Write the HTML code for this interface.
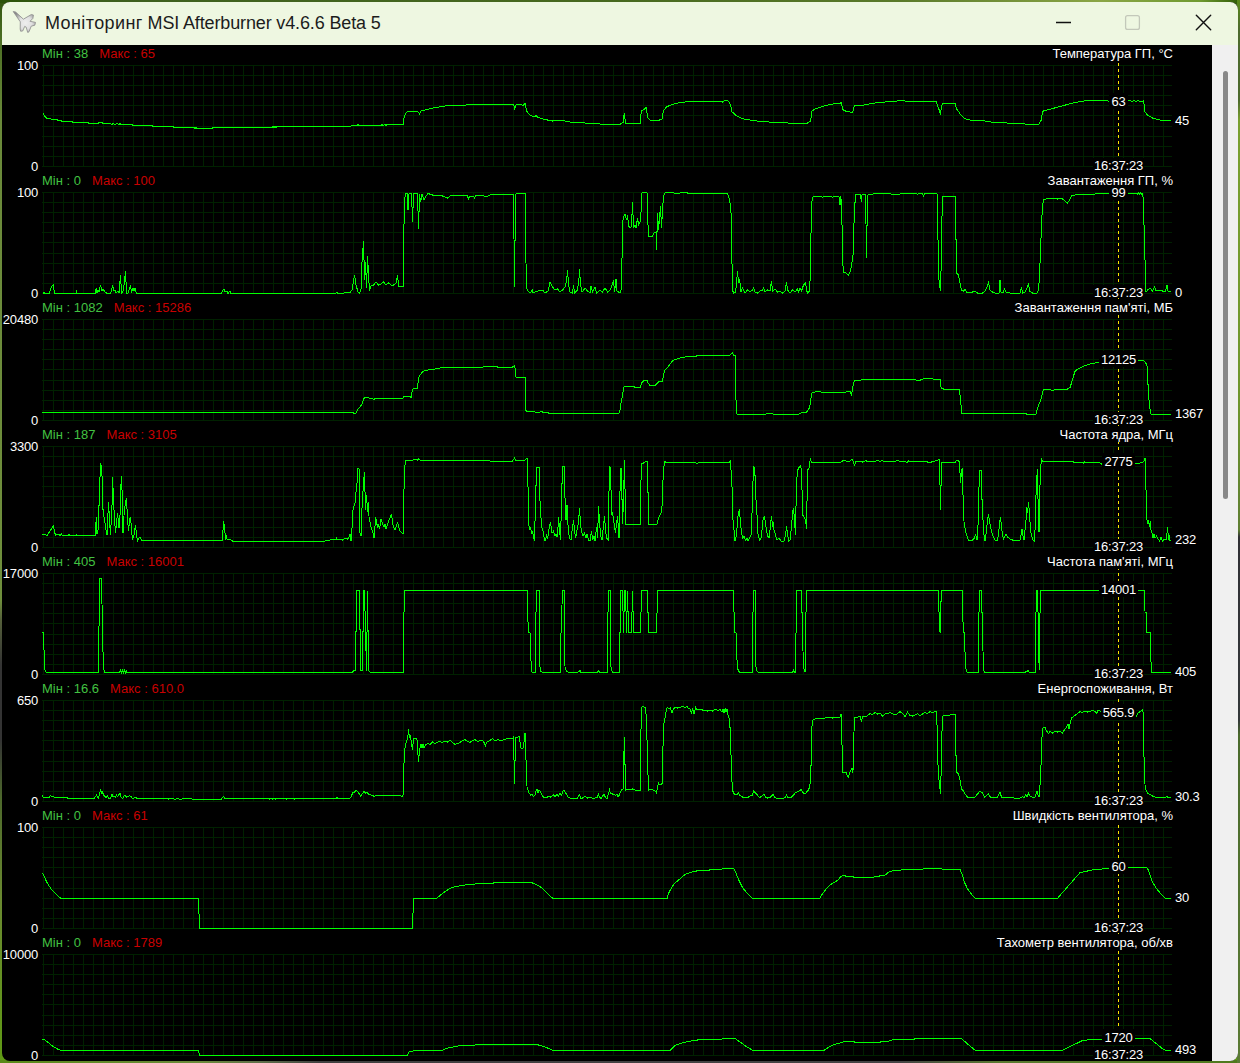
<!DOCTYPE html>
<html lang="uk"><head><meta charset="utf-8"><title>Моніторинг MSI Afterburner</title>
<style>
html,body{margin:0;padding:0}
body{width:1240px;height:1063px;overflow:hidden;position:relative;font-family:"Liberation Sans",Arial,sans-serif;font-size:13px;
background:linear-gradient(180deg,#33560f 0,#4c6f24 40px,#6a8a3a 120px,#6f8f3c 600px,#55603a 620px,#343434 665px,#343434 740px,#4e6a2c 800px,#6a8a30 900px,#5f9a14 1063px)}
.top{position:absolute;left:0;top:0;width:1240px;height:3px;background:linear-gradient(90deg,#2b5208 0,#3d5f1d 100px,#47691f 620px,#5a7a2a 900px,#8aa545 1100px,#6f9a30 1200px,#2e5a06 1240px)}
.bot{position:absolute;left:0;top:1060px;width:1240px;height:3px;background:linear-gradient(90deg,#5a8a18 0,#6a8a3a 200px,#5f6f4a 260px,#404040 320px,#444444 900px,#5a7a30 1000px,#4f7a1c 1240px)}
.rt{position:absolute;left:1237px;top:0;width:3px;height:1063px;background:linear-gradient(180deg,#5a8a1a 0,#4d6a2e 30px,#4d6a2e 100px,#7aa030 120px,#6f962e 400px,#5f7f33 530px,#303035 537px,#34383a 720px,#4a6a2c 735px,#5b7b35 1063px)}
.win{position:absolute;left:2px;top:2px;width:1236px;height:1059px;border-radius:8px;background:#000;overflow:hidden}
.tb{position:absolute;left:0;top:0;width:1236px;height:43px;background:#eef7e1}
.ttl{position:absolute;left:43px;top:9px;font-size:18px;line-height:24px;color:#1c1c1c;white-space:nowrap;letter-spacing:-0.14px}
.w1{letter-spacing:0.39px}
.sb{position:absolute;left:1210px;top:43px;width:26px;height:1016px;background:#f0f0f0}
.th{position:absolute;left:1221px;top:69px;width:5px;height:428px;border-radius:2.5px;background:#888}
.cv{position:absolute;left:0;top:0}
.hd,.tt,.ax,.tm,.vl,.cu{position:absolute;height:16px;line-height:16px;white-space:nowrap;color:#fff}
.hd{left:42px}
.ax,.vl,.cu,.tm{letter-spacing:-0.2px}
.mn{color:#42c242}
.mx{color:#c80000;margin-left:11px}
.tt{right:67px;text-align:right;line-height:17px;background:#000;padding-left:1px}
.ax{right:1202px;text-align:right}
.tm{left:1068.5px;width:100px;text-align:center;height:13px;line-height:16px;overflow:hidden;top:0;margin-top:0}
.tm span{background:#000;display:inline-block;padding:0 1px;height:13px}
.vl{left:1068.5px;width:100px;text-align:center;line-height:17px}
.vl span{background:#000;display:inline-block;padding:0 2px;height:16px}
.v2 span{background:linear-gradient(#000,#000) 0 3px/100% 13px no-repeat}
.cu{left:1175px;line-height:17px}
.ic{position:absolute}
</style></head><body>
<div class="top"></div><div class="bot"></div><div class="rt"></div>
<div class="win">
<div class="tb">
<svg class="ic" style="left:10px;top:8px" width="26" height="24" viewBox="0 0 26 24"><defs><radialGradient id="jg" cx="13.5" cy="13" r="13" gradientUnits="userSpaceOnUse"><stop offset="0" stop-color="#eeeeee"/><stop offset="0.5" stop-color="#e0e0e0"/><stop offset="1" stop-color="#8a8a8a"/></radialGradient></defs><path d="M1.2 1.5 L3.6 2 L11.4 9.2 L19.2 4.6 L21.4 5 L20.9 8.4 L18 11.3 L23.5 12.4 L22.8 15.2 L19.2 16.2 L17 21.8 L15.7 22.4 L14.2 17.2 L12.7 16.4 L10.7 21 L8.6 21.2 L8.2 19 L8.3 11.8 Z" fill="url(#jg)" stroke="#8f8f8f" stroke-opacity="0.85" stroke-width="1" stroke-linejoin="round"/></svg>
<div class="ttl"><span class="w1">Моніторинг</span> MSI Afterburner v4.6.6 Beta 5</div>
<svg class="ic" style="left:1040px;top:0" width="190" height="43" viewBox="0 0 190 43"><path d="M14 20.5H29" stroke="#111" stroke-width="1.3" fill="none"/><rect x="83.6" y="13.6" width="13.8" height="13.8" rx="2" fill="none" stroke="#c3c8ba" stroke-width="1.3"/><path d="M154.3 13.3L168.7 27.7M168.7 13.3L154.3 27.7" stroke="#111" stroke-width="1.4" fill="none" stroke-linecap="round"/></svg>
</div>
<div class="sb"></div><div class="th"></div>
</div>
<svg class="cv" width="1240" height="1063" viewBox="0 0 1240 1063"><path d="M42 65.5H1172M42 75.5H1172M42 85.5H1172M42 95.5H1172M42 105.5H1172M42 115.5H1172M42 126.5H1172M42 136.5H1172M42 146.5H1172M42 156.5H1172M42 166.5H1172M43.5 65V167M53.5 65V167M63.5 65V167M73.5 65V167M83.5 65V167M93.5 65V167M103.5 65V167M113.5 65V167M123.5 65V167M133.5 65V167M143.5 65V167M153.5 65V167M163.5 65V167M173.5 65V167M183.5 65V167M193.5 65V167M203.5 65V167M213.5 65V167M223.5 65V167M233.5 65V167M243.5 65V167M253.5 65V167M263.5 65V167M273.5 65V167M283.5 65V167M293.5 65V167M303.5 65V167M313.5 65V167M323.5 65V167M333.5 65V167M343.5 65V167M353.5 65V167M363.5 65V167M373.5 65V167M383.5 65V167M393.5 65V167M403.5 65V167M413.5 65V167M423.5 65V167M433.5 65V167M443.5 65V167M453.5 65V167M463.5 65V167M473.5 65V167M483.5 65V167M493.5 65V167M503.5 65V167M513.5 65V167M523.5 65V167M533.5 65V167M543.5 65V167M553.5 65V167M563.5 65V167M573.5 65V167M583.5 65V167M593.5 65V167M603.5 65V167M613.5 65V167M623.5 65V167M633.5 65V167M643.5 65V167M653.5 65V167M663.5 65V167M673.5 65V167M683.5 65V167M693.5 65V167M703.5 65V167M713.5 65V167M723.5 65V167M733.5 65V167M743.5 65V167M753.5 65V167M763.5 65V167M773.5 65V167M783.5 65V167M793.5 65V167M803.5 65V167M813.5 65V167M823.5 65V167M833.5 65V167M843.5 65V167M853.5 65V167M863.5 65V167M873.5 65V167M883.5 65V167M893.5 65V167M903.5 65V167M913.5 65V167M923.5 65V167M933.5 65V167M943.5 65V167M953.5 65V167M963.5 65V167M973.5 65V167M983.5 65V167M993.5 65V167M1003.5 65V167M1013.5 65V167M1023.5 65V167M1033.5 65V167M1043.5 65V167M1053.5 65V167M1063.5 65V167M1073.5 65V167M1083.5 65V167M1093.5 65V167M1103.5 65V167M1113.5 65V167M1123.5 65V167M1133.5 65V167M1143.5 65V167M1153.5 65V167M1163.5 65V167M42 192.5H1172M42 202.5H1172M42 212.5H1172M42 222.5H1172M42 232.5H1172M42 242.5H1172M42 253.5H1172M42 263.5H1172M42 273.5H1172M42 283.5H1172M42 293.5H1172M43.5 192V294M53.5 192V294M63.5 192V294M73.5 192V294M83.5 192V294M93.5 192V294M103.5 192V294M113.5 192V294M123.5 192V294M133.5 192V294M143.5 192V294M153.5 192V294M163.5 192V294M173.5 192V294M183.5 192V294M193.5 192V294M203.5 192V294M213.5 192V294M223.5 192V294M233.5 192V294M243.5 192V294M253.5 192V294M263.5 192V294M273.5 192V294M283.5 192V294M293.5 192V294M303.5 192V294M313.5 192V294M323.5 192V294M333.5 192V294M343.5 192V294M353.5 192V294M363.5 192V294M373.5 192V294M383.5 192V294M393.5 192V294M403.5 192V294M413.5 192V294M423.5 192V294M433.5 192V294M443.5 192V294M453.5 192V294M463.5 192V294M473.5 192V294M483.5 192V294M493.5 192V294M503.5 192V294M513.5 192V294M523.5 192V294M533.5 192V294M543.5 192V294M553.5 192V294M563.5 192V294M573.5 192V294M583.5 192V294M593.5 192V294M603.5 192V294M613.5 192V294M623.5 192V294M633.5 192V294M643.5 192V294M653.5 192V294M663.5 192V294M673.5 192V294M683.5 192V294M693.5 192V294M703.5 192V294M713.5 192V294M723.5 192V294M733.5 192V294M743.5 192V294M753.5 192V294M763.5 192V294M773.5 192V294M783.5 192V294M793.5 192V294M803.5 192V294M813.5 192V294M823.5 192V294M833.5 192V294M843.5 192V294M853.5 192V294M863.5 192V294M873.5 192V294M883.5 192V294M893.5 192V294M903.5 192V294M913.5 192V294M923.5 192V294M933.5 192V294M943.5 192V294M953.5 192V294M963.5 192V294M973.5 192V294M983.5 192V294M993.5 192V294M1003.5 192V294M1013.5 192V294M1023.5 192V294M1033.5 192V294M1043.5 192V294M1053.5 192V294M1063.5 192V294M1073.5 192V294M1083.5 192V294M1093.5 192V294M1103.5 192V294M1113.5 192V294M1123.5 192V294M1133.5 192V294M1143.5 192V294M1153.5 192V294M1163.5 192V294M42 319.5H1172M42 329.5H1172M42 339.5H1172M42 349.5H1172M42 359.5H1172M42 369.5H1172M42 380.5H1172M42 390.5H1172M42 400.5H1172M42 410.5H1172M42 420.5H1172M43.5 319V421M53.5 319V421M63.5 319V421M73.5 319V421M83.5 319V421M93.5 319V421M103.5 319V421M113.5 319V421M123.5 319V421M133.5 319V421M143.5 319V421M153.5 319V421M163.5 319V421M173.5 319V421M183.5 319V421M193.5 319V421M203.5 319V421M213.5 319V421M223.5 319V421M233.5 319V421M243.5 319V421M253.5 319V421M263.5 319V421M273.5 319V421M283.5 319V421M293.5 319V421M303.5 319V421M313.5 319V421M323.5 319V421M333.5 319V421M343.5 319V421M353.5 319V421M363.5 319V421M373.5 319V421M383.5 319V421M393.5 319V421M403.5 319V421M413.5 319V421M423.5 319V421M433.5 319V421M443.5 319V421M453.5 319V421M463.5 319V421M473.5 319V421M483.5 319V421M493.5 319V421M503.5 319V421M513.5 319V421M523.5 319V421M533.5 319V421M543.5 319V421M553.5 319V421M563.5 319V421M573.5 319V421M583.5 319V421M593.5 319V421M603.5 319V421M613.5 319V421M623.5 319V421M633.5 319V421M643.5 319V421M653.5 319V421M663.5 319V421M673.5 319V421M683.5 319V421M693.5 319V421M703.5 319V421M713.5 319V421M723.5 319V421M733.5 319V421M743.5 319V421M753.5 319V421M763.5 319V421M773.5 319V421M783.5 319V421M793.5 319V421M803.5 319V421M813.5 319V421M823.5 319V421M833.5 319V421M843.5 319V421M853.5 319V421M863.5 319V421M873.5 319V421M883.5 319V421M893.5 319V421M903.5 319V421M913.5 319V421M923.5 319V421M933.5 319V421M943.5 319V421M953.5 319V421M963.5 319V421M973.5 319V421M983.5 319V421M993.5 319V421M1003.5 319V421M1013.5 319V421M1023.5 319V421M1033.5 319V421M1043.5 319V421M1053.5 319V421M1063.5 319V421M1073.5 319V421M1083.5 319V421M1093.5 319V421M1103.5 319V421M1113.5 319V421M1123.5 319V421M1133.5 319V421M1143.5 319V421M1153.5 319V421M1163.5 319V421M42 446.5H1172M42 456.5H1172M42 466.5H1172M42 476.5H1172M42 486.5H1172M42 496.5H1172M42 507.5H1172M42 517.5H1172M42 527.5H1172M42 537.5H1172M42 547.5H1172M43.5 446V548M53.5 446V548M63.5 446V548M73.5 446V548M83.5 446V548M93.5 446V548M103.5 446V548M113.5 446V548M123.5 446V548M133.5 446V548M143.5 446V548M153.5 446V548M163.5 446V548M173.5 446V548M183.5 446V548M193.5 446V548M203.5 446V548M213.5 446V548M223.5 446V548M233.5 446V548M243.5 446V548M253.5 446V548M263.5 446V548M273.5 446V548M283.5 446V548M293.5 446V548M303.5 446V548M313.5 446V548M323.5 446V548M333.5 446V548M343.5 446V548M353.5 446V548M363.5 446V548M373.5 446V548M383.5 446V548M393.5 446V548M403.5 446V548M413.5 446V548M423.5 446V548M433.5 446V548M443.5 446V548M453.5 446V548M463.5 446V548M473.5 446V548M483.5 446V548M493.5 446V548M503.5 446V548M513.5 446V548M523.5 446V548M533.5 446V548M543.5 446V548M553.5 446V548M563.5 446V548M573.5 446V548M583.5 446V548M593.5 446V548M603.5 446V548M613.5 446V548M623.5 446V548M633.5 446V548M643.5 446V548M653.5 446V548M663.5 446V548M673.5 446V548M683.5 446V548M693.5 446V548M703.5 446V548M713.5 446V548M723.5 446V548M733.5 446V548M743.5 446V548M753.5 446V548M763.5 446V548M773.5 446V548M783.5 446V548M793.5 446V548M803.5 446V548M813.5 446V548M823.5 446V548M833.5 446V548M843.5 446V548M853.5 446V548M863.5 446V548M873.5 446V548M883.5 446V548M893.5 446V548M903.5 446V548M913.5 446V548M923.5 446V548M933.5 446V548M943.5 446V548M953.5 446V548M963.5 446V548M973.5 446V548M983.5 446V548M993.5 446V548M1003.5 446V548M1013.5 446V548M1023.5 446V548M1033.5 446V548M1043.5 446V548M1053.5 446V548M1063.5 446V548M1073.5 446V548M1083.5 446V548M1093.5 446V548M1103.5 446V548M1113.5 446V548M1123.5 446V548M1133.5 446V548M1143.5 446V548M1153.5 446V548M1163.5 446V548M42 573.5H1172M42 583.5H1172M42 593.5H1172M42 603.5H1172M42 613.5H1172M42 623.5H1172M42 634.5H1172M42 644.5H1172M42 654.5H1172M42 664.5H1172M42 674.5H1172M43.5 573V675M53.5 573V675M63.5 573V675M73.5 573V675M83.5 573V675M93.5 573V675M103.5 573V675M113.5 573V675M123.5 573V675M133.5 573V675M143.5 573V675M153.5 573V675M163.5 573V675M173.5 573V675M183.5 573V675M193.5 573V675M203.5 573V675M213.5 573V675M223.5 573V675M233.5 573V675M243.5 573V675M253.5 573V675M263.5 573V675M273.5 573V675M283.5 573V675M293.5 573V675M303.5 573V675M313.5 573V675M323.5 573V675M333.5 573V675M343.5 573V675M353.5 573V675M363.5 573V675M373.5 573V675M383.5 573V675M393.5 573V675M403.5 573V675M413.5 573V675M423.5 573V675M433.5 573V675M443.5 573V675M453.5 573V675M463.5 573V675M473.5 573V675M483.5 573V675M493.5 573V675M503.5 573V675M513.5 573V675M523.5 573V675M533.5 573V675M543.5 573V675M553.5 573V675M563.5 573V675M573.5 573V675M583.5 573V675M593.5 573V675M603.5 573V675M613.5 573V675M623.5 573V675M633.5 573V675M643.5 573V675M653.5 573V675M663.5 573V675M673.5 573V675M683.5 573V675M693.5 573V675M703.5 573V675M713.5 573V675M723.5 573V675M733.5 573V675M743.5 573V675M753.5 573V675M763.5 573V675M773.5 573V675M783.5 573V675M793.5 573V675M803.5 573V675M813.5 573V675M823.5 573V675M833.5 573V675M843.5 573V675M853.5 573V675M863.5 573V675M873.5 573V675M883.5 573V675M893.5 573V675M903.5 573V675M913.5 573V675M923.5 573V675M933.5 573V675M943.5 573V675M953.5 573V675M963.5 573V675M973.5 573V675M983.5 573V675M993.5 573V675M1003.5 573V675M1013.5 573V675M1023.5 573V675M1033.5 573V675M1043.5 573V675M1053.5 573V675M1063.5 573V675M1073.5 573V675M1083.5 573V675M1093.5 573V675M1103.5 573V675M1113.5 573V675M1123.5 573V675M1133.5 573V675M1143.5 573V675M1153.5 573V675M1163.5 573V675M42 700.5H1172M42 710.5H1172M42 720.5H1172M42 730.5H1172M42 740.5H1172M42 750.5H1172M42 761.5H1172M42 771.5H1172M42 781.5H1172M42 791.5H1172M42 801.5H1172M43.5 700V802M53.5 700V802M63.5 700V802M73.5 700V802M83.5 700V802M93.5 700V802M103.5 700V802M113.5 700V802M123.5 700V802M133.5 700V802M143.5 700V802M153.5 700V802M163.5 700V802M173.5 700V802M183.5 700V802M193.5 700V802M203.5 700V802M213.5 700V802M223.5 700V802M233.5 700V802M243.5 700V802M253.5 700V802M263.5 700V802M273.5 700V802M283.5 700V802M293.5 700V802M303.5 700V802M313.5 700V802M323.5 700V802M333.5 700V802M343.5 700V802M353.5 700V802M363.5 700V802M373.5 700V802M383.5 700V802M393.5 700V802M403.5 700V802M413.5 700V802M423.5 700V802M433.5 700V802M443.5 700V802M453.5 700V802M463.5 700V802M473.5 700V802M483.5 700V802M493.5 700V802M503.5 700V802M513.5 700V802M523.5 700V802M533.5 700V802M543.5 700V802M553.5 700V802M563.5 700V802M573.5 700V802M583.5 700V802M593.5 700V802M603.5 700V802M613.5 700V802M623.5 700V802M633.5 700V802M643.5 700V802M653.5 700V802M663.5 700V802M673.5 700V802M683.5 700V802M693.5 700V802M703.5 700V802M713.5 700V802M723.5 700V802M733.5 700V802M743.5 700V802M753.5 700V802M763.5 700V802M773.5 700V802M783.5 700V802M793.5 700V802M803.5 700V802M813.5 700V802M823.5 700V802M833.5 700V802M843.5 700V802M853.5 700V802M863.5 700V802M873.5 700V802M883.5 700V802M893.5 700V802M903.5 700V802M913.5 700V802M923.5 700V802M933.5 700V802M943.5 700V802M953.5 700V802M963.5 700V802M973.5 700V802M983.5 700V802M993.5 700V802M1003.5 700V802M1013.5 700V802M1023.5 700V802M1033.5 700V802M1043.5 700V802M1053.5 700V802M1063.5 700V802M1073.5 700V802M1083.5 700V802M1093.5 700V802M1103.5 700V802M1113.5 700V802M1123.5 700V802M1133.5 700V802M1143.5 700V802M1153.5 700V802M1163.5 700V802M42 827.5H1172M42 837.5H1172M42 847.5H1172M42 857.5H1172M42 867.5H1172M42 877.5H1172M42 888.5H1172M42 898.5H1172M42 908.5H1172M42 918.5H1172M42 928.5H1172M43.5 827V929M53.5 827V929M63.5 827V929M73.5 827V929M83.5 827V929M93.5 827V929M103.5 827V929M113.5 827V929M123.5 827V929M133.5 827V929M143.5 827V929M153.5 827V929M163.5 827V929M173.5 827V929M183.5 827V929M193.5 827V929M203.5 827V929M213.5 827V929M223.5 827V929M233.5 827V929M243.5 827V929M253.5 827V929M263.5 827V929M273.5 827V929M283.5 827V929M293.5 827V929M303.5 827V929M313.5 827V929M323.5 827V929M333.5 827V929M343.5 827V929M353.5 827V929M363.5 827V929M373.5 827V929M383.5 827V929M393.5 827V929M403.5 827V929M413.5 827V929M423.5 827V929M433.5 827V929M443.5 827V929M453.5 827V929M463.5 827V929M473.5 827V929M483.5 827V929M493.5 827V929M503.5 827V929M513.5 827V929M523.5 827V929M533.5 827V929M543.5 827V929M553.5 827V929M563.5 827V929M573.5 827V929M583.5 827V929M593.5 827V929M603.5 827V929M613.5 827V929M623.5 827V929M633.5 827V929M643.5 827V929M653.5 827V929M663.5 827V929M673.5 827V929M683.5 827V929M693.5 827V929M703.5 827V929M713.5 827V929M723.5 827V929M733.5 827V929M743.5 827V929M753.5 827V929M763.5 827V929M773.5 827V929M783.5 827V929M793.5 827V929M803.5 827V929M813.5 827V929M823.5 827V929M833.5 827V929M843.5 827V929M853.5 827V929M863.5 827V929M873.5 827V929M883.5 827V929M893.5 827V929M903.5 827V929M913.5 827V929M923.5 827V929M933.5 827V929M943.5 827V929M953.5 827V929M963.5 827V929M973.5 827V929M983.5 827V929M993.5 827V929M1003.5 827V929M1013.5 827V929M1023.5 827V929M1033.5 827V929M1043.5 827V929M1053.5 827V929M1063.5 827V929M1073.5 827V929M1083.5 827V929M1093.5 827V929M1103.5 827V929M1113.5 827V929M1123.5 827V929M1133.5 827V929M1143.5 827V929M1153.5 827V929M1163.5 827V929M42 954.5H1172M42 964.5H1172M42 974.5H1172M42 984.5H1172M42 994.5H1172M42 1004.5H1172M42 1015.5H1172M42 1025.5H1172M42 1035.5H1172M42 1045.5H1172M42 1055.5H1172M43.5 954V1056M53.5 954V1056M63.5 954V1056M73.5 954V1056M83.5 954V1056M93.5 954V1056M103.5 954V1056M113.5 954V1056M123.5 954V1056M133.5 954V1056M143.5 954V1056M153.5 954V1056M163.5 954V1056M173.5 954V1056M183.5 954V1056M193.5 954V1056M203.5 954V1056M213.5 954V1056M223.5 954V1056M233.5 954V1056M243.5 954V1056M253.5 954V1056M263.5 954V1056M273.5 954V1056M283.5 954V1056M293.5 954V1056M303.5 954V1056M313.5 954V1056M323.5 954V1056M333.5 954V1056M343.5 954V1056M353.5 954V1056M363.5 954V1056M373.5 954V1056M383.5 954V1056M393.5 954V1056M403.5 954V1056M413.5 954V1056M423.5 954V1056M433.5 954V1056M443.5 954V1056M453.5 954V1056M463.5 954V1056M473.5 954V1056M483.5 954V1056M493.5 954V1056M503.5 954V1056M513.5 954V1056M523.5 954V1056M533.5 954V1056M543.5 954V1056M553.5 954V1056M563.5 954V1056M573.5 954V1056M583.5 954V1056M593.5 954V1056M603.5 954V1056M613.5 954V1056M623.5 954V1056M633.5 954V1056M643.5 954V1056M653.5 954V1056M663.5 954V1056M673.5 954V1056M683.5 954V1056M693.5 954V1056M703.5 954V1056M713.5 954V1056M723.5 954V1056M733.5 954V1056M743.5 954V1056M753.5 954V1056M763.5 954V1056M773.5 954V1056M783.5 954V1056M793.5 954V1056M803.5 954V1056M813.5 954V1056M823.5 954V1056M833.5 954V1056M843.5 954V1056M853.5 954V1056M863.5 954V1056M873.5 954V1056M883.5 954V1056M893.5 954V1056M903.5 954V1056M913.5 954V1056M923.5 954V1056M933.5 954V1056M943.5 954V1056M953.5 954V1056M963.5 954V1056M973.5 954V1056M983.5 954V1056M993.5 954V1056M1003.5 954V1056M1013.5 954V1056M1023.5 954V1056M1033.5 954V1056M1043.5 954V1056M1053.5 954V1056M1063.5 954V1056M1073.5 954V1056M1083.5 954V1056M1093.5 954V1056M1103.5 954V1056M1113.5 954V1056M1123.5 954V1056M1133.5 954V1056M1143.5 954V1056M1153.5 954V1056M1163.5 954V1056" stroke="#002100" stroke-width="1" fill="none" shape-rendering="crispEdges"/><path d="M1118.5 45V1059" stroke="#ffe600" stroke-width="1" stroke-dasharray="3 3" fill="none" shape-rendering="crispEdges"/><polyline points="43.03,113.52 45.03,116.52 47.03,118.52 55.03,119.52 60.03,120.52 63.03,121.52 72.03,121.52 73.03,122.52 88.03,122.52 89.03,123.52 98.03,123.52 99.03,122.52 102.03,122.52 103.03,123.52 110.03,123.52 112.03,124.52 113.03,123.52 115.03,124.52 117.03,123.52 119.03,124.52 120.03,123.52 121.03,124.52 132.03,124.52 133.03,125.52 152.03,125.52 153.03,126.52 173.03,126.52 174.03,127.52 194.03,127.52 195.03,128.52 196.03,127.52 197.03,128.52 212.03,128.52 213.03,127.52 272.03,127.52 273.03,126.52 274.03,127.52 275.03,126.52 276.03,127.52 277.03,126.52 350.03,126.52 352.53,125.52 357.03,125.52 358.03,124.52 359.03,125.52 381.03,125.52 382.03,124.52 383.03,125.52 385.03,124.52 386.03,125.52 387.03,124.52 390.03,124.52 403.03,124.52 404.03,117.52 405.53,113.27 408.03,111.52 417.53,111.27 419.53,113.77 421.03,111.02 432.53,108.02 447.53,105.52 465.03,105.02 512.53,104.52 513.78,104.52 514.53,110.02 515.78,105.02 521.03,104.52 523.03,106.02 525.03,103.02 526.53,111.02 530.03,115.02 534.03,117.02 536.03,115.52 538.03,117.52 545.03,119.52 552.53,121.02 562.53,120.52 570.03,122.02 585.03,123.02 600.03,124.02 620.03,124.27 623.03,122.52 624.28,113.02 625.53,122.52 626.03,123.52 640.03,123.52 641.28,111.27 643.78,109.52 646.28,107.52 647.53,117.52 650.03,120.02 658.78,120.27 662.03,119.02 663.28,111.02 666.28,107.02 672.53,104.27 680.03,102.52 695.03,101.02 720.03,101.02 722.53,102.02 725.03,100.27 728.78,101.27 730.53,105.02 732.03,111.77 736.03,115.52 742.53,118.77 752.53,120.52 765.03,121.77 782.53,122.77 795.03,123.27 807.53,123.02 810.53,121.02 812.03,111.02 815.03,109.02 825.03,105.52 832.53,104.02 840.03,103.27 841.53,102.52 842.53,109.52 846.03,111.27 852.53,112.52 854.53,105.52 862.53,105.27 872.53,103.27 890.03,101.52 900.03,100.77 915.03,101.52 930.03,101.02 936.03,101.52 938.78,108.77 940.28,113.27 942.53,103.02 955.03,103.02 956.53,108.77 960.03,113.77 965.03,118.77 973.78,120.77 980.03,120.27 991.28,122.02 1007.53,123.02 1025.03,124.02 1038.78,124.02 1041.28,120.02 1042.53,111.27 1050.03,109.27 1062.53,105.77 1075.03,102.52 1085.03,100.77 1102.53,100.27 1110.03,101.27 1127.53,101.27 1130.03,100.52 1132.03,101.52 1134.03,100.52 1136.03,101.52 1138.03,100.52 1140.03,101.52 1142.53,101.27 1143.78,100.02 1144.53,111.27 1147.53,115.02 1152.53,118.02 1160.03,120.02 1166.28,120.77 1171.28,121.02" stroke="#00ff00" stroke-width="1" fill="none" shape-rendering="crispEdges" stroke-linejoin="miter"/><polyline points="43.03,293.52 44.03,292.52 45.03,293.52 49.03,293.52 51.28,287.02 53.28,285.02 54.53,293.52 76.03,293.52 76.53,292.02 77.03,293.52 95.03,293.52 96.28,288.02 97.03,293.02 98.03,290.02 99.03,292.02 100.53,285.02 102.03,291.02 103.03,289.02 105.03,292.02 107.03,293.52 110.03,293.52 111.53,291.02 112.53,285.02 114.03,291.02 115.03,290.02 116.03,293.02 118.03,291.02 119.03,293.02 120.53,275.02 121.53,293.02 123.03,291.02 124.03,285.02 125.53,271.02 126.53,293.02 128.03,293.02 129.53,288.02 130.53,286.02 131.53,293.02 133.03,288.02 134.03,291.02 135.03,288.02 136.53,293.52 221.03,293.52 223.78,289.02 225.03,292.02 227.03,291.02 228.03,293.52 230.03,291.02 231.03,293.52 335.03,293.52 337.03,292.52 338.03,293.52 350.03,292.52 352.03,290.02 354.53,275.02 356.03,285.02 358.03,292.02 359.53,293.02 361.03,289.02 362.03,262.02 363.53,241.02 364.53,280.02 365.53,262.02 366.53,288.02 367.53,256.02 368.53,275.02 369.53,291.02 371.03,286.02 373.53,285.02 376.03,282.02 378.53,285.02 381.03,284.02 383.53,282.02 386.03,285.02 388.53,283.02 391.03,285.02 393.53,285.02 396.03,283.02 397.53,275.02 398.53,286.02 403.03,286.02 403.53,247.02 404.53,200.02 405.53,193.52 407.03,193.52 408.03,210.02 409.03,193.52 411.53,193.52 412.53,222.02 413.53,193.52 417.53,193.52 418.53,229.02 419.53,194.02 420.53,202.02 422.03,194.02 424.03,200.02 425.53,197.02 428.03,193.52 432.53,195.02 437.53,195.02 442.53,196.02 445.03,197.02 447.53,198.02 450.03,196.02 457.53,195.02 462.53,195.02 467.53,196.02 468.53,199.02 470.03,196.02 473.53,196.02 474.53,198.02 476.03,195.02 482.53,195.02 486.03,197.02 490.03,195.02 502.53,194.02 505.03,195.02 507.53,194.02 513.53,194.02 514.03,240.02 514.53,287.02 515.03,240.02 515.53,194.02 525.03,193.52 525.53,240.02 526.53,288.02 528.03,291.02 530.03,293.02 532.53,290.02 533.03,293.02 537.53,291.02 542.53,290.02 545.03,293.02 548.03,291.02 550.03,282.02 552.53,287.02 555.03,290.02 557.53,289.02 560.03,292.02 562.53,290.02 565.03,287.02 566.53,281.02 567.53,270.02 568.53,285.02 570.03,292.02 572.53,293.02 573.53,285.02 574.53,293.02 577.53,290.02 579.03,278.02 579.53,269.02 580.53,285.02 582.03,292.02 585.03,288.02 587.53,291.02 590.03,293.02 591.03,286.02 592.53,292.02 595.03,287.02 596.53,293.02 600.03,290.02 602.53,292.02 605.03,288.02 607.53,292.02 610.03,290.02 612.53,284.02 613.53,280.02 614.53,292.02 616.03,279.02 617.03,291.02 620.03,293.02 621.53,289.02 622.03,257.02 622.53,222.02 624.03,216.02 625.03,214.02 626.53,220.02 627.53,215.02 628.53,226.02 630.03,228.02 631.53,226.02 632.53,202.02 633.53,228.02 635.03,225.02 636.03,228.02 637.53,218.02 638.53,225.02 640.03,222.02 641.03,212.02 642.03,192.52 647.03,193.02 647.53,215.02 648.53,236.02 652.53,236.02 654.03,233.02 656.03,232.02 656.53,250.02 657.53,213.02 658.53,230.02 659.53,217.02 660.53,206.02 661.53,228.02 662.53,210.02 663.53,196.02 665.03,193.02 670.03,192.52 677.53,193.52 680.03,193.02 685.03,192.52 690.03,193.52 700.03,193.52 705.03,193.02 717.53,193.02 727.53,193.02 729.03,198.02 730.53,205.02 731.53,222.02 732.03,265.02 732.53,290.02 733.53,293.02 735.53,292.02 736.53,283.02 737.53,271.02 738.53,283.02 739.53,279.02 741.03,292.02 742.53,288.02 745.03,293.02 747.53,290.02 750.03,292.02 752.53,290.02 753.53,288.02 755.03,292.02 757.53,293.02 760.03,291.02 762.53,290.02 763.53,288.02 765.03,292.02 767.53,290.02 770.03,291.02 771.53,281.02 772.53,291.02 775.03,289.02 777.53,292.02 780.03,291.02 782.53,293.02 785.03,291.02 786.53,282.02 787.53,290.02 790.03,293.02 792.53,290.02 795.03,292.02 797.53,289.02 798.53,292.02 800.03,288.02 801.53,291.02 803.53,285.02 805.53,283.02 806.53,290.02 807.53,293.02 809.53,291.02 810.53,270.02 811.03,232.02 812.03,200.02 813.03,197.02 815.03,196.52 822.53,197.02 825.03,196.52 832.53,197.02 835.03,196.52 839.03,197.02 840.03,205.02 840.53,196.52 841.53,202.02 842.03,225.02 842.53,260.02 843.53,272.02 846.03,273.02 848.53,275.02 850.03,272.02 851.03,268.02 852.03,262.02 853.03,255.02 853.53,235.02 854.53,210.02 855.53,194.52 860.03,194.52 861.53,202.02 862.03,194.52 865.53,194.52 866.03,225.02 866.53,258.02 867.03,225.02 867.53,200.02 868.03,195.02 872.53,194.02 880.03,193.52 887.53,193.52 895.03,194.52 900.03,194.02 910.03,193.52 917.53,194.02 922.53,193.52 923.53,196.02 925.03,193.52 935.03,193.52 937.03,194.02 937.53,215.02 938.03,240.02 939.03,280.02 939.53,285.02 940.53,291.02 941.03,270.02 941.53,235.02 942.53,197.02 943.03,196.52 955.53,196.52 956.03,240.02 956.53,273.02 958.53,275.02 960.03,283.02 961.53,290.02 963.53,291.02 965.03,289.02 966.53,292.02 970.03,293.02 972.53,292.02 975.03,291.02 977.53,293.02 982.53,293.02 985.03,291.02 987.53,286.02 988.53,283.02 990.03,290.02 992.53,292.02 995.03,293.02 999.03,293.02 1000.03,280.02 1001.03,292.02 1003.03,293.02 1004.53,289.02 1006.03,292.02 1010.03,293.02 1020.03,293.02 1021.53,287.02 1022.53,293.02 1025.03,292.02 1027.03,288.02 1028.53,283.02 1029.53,291.02 1032.53,293.02 1037.03,293.02 1038.53,290.02 1039.53,275.02 1040.53,250.02 1041.53,225.02 1042.53,205.02 1043.53,200.02 1046.03,199.02 1050.03,198.52 1055.03,198.02 1057.53,199.02 1060.03,198.02 1062.53,199.02 1065.03,201.02 1067.53,203.02 1069.53,200.02 1071.53,196.02 1075.03,195.02 1080.03,194.52 1087.53,194.02 1095.03,194.02 1102.53,193.52 1110.03,193.52 1127.03,193.52 1135.03,193.52 1137.53,194.02 1138.53,193.02 1139.53,194.02 1140.53,193.02 1141.53,194.02 1142.53,193.52 1143.53,200.02 1144.03,225.02 1145.03,260.02 1145.53,285.02 1146.03,292.02 1147.53,290.02 1150.03,288.02 1152.53,291.02 1154.53,287.02 1156.03,291.02 1160.03,290.02 1162.53,291.02 1165.03,292.02 1167.03,285.02 1168.03,291.02 1171.03,292.02" stroke="#00ff00" stroke-width="1" fill="none" shape-rendering="crispEdges" stroke-linejoin="miter"/><polyline points="42.03,412.52 352.53,412.52 353.53,413.02 356.03,413.02 357.53,409.52 360.03,407.02 362.03,404.02 363.53,399.02 365.03,397.52 367.53,397.52 370.03,398.52 372.53,398.52 374.03,399.52 375.03,398.52 402.53,398.52 404.03,396.52 410.03,396.52 411.03,397.52 412.03,392.02 413.03,388.52 417.03,388.52 418.03,383.02 419.03,377.02 420.03,375.02 422.53,372.02 425.03,370.52 427.53,370.02 432.53,369.52 437.53,368.52 440.03,368.02 452.53,367.52 455.03,367.02 482.53,367.02 485.03,366.52 495.03,366.52 497.53,367.02 512.53,367.02 514.53,365.52 515.03,368.02 516.03,377.02 525.03,377.52 525.53,395.02 526.03,411.02 530.03,411.02 535.03,412.02 540.03,412.02 541.03,411.02 542.53,412.02 547.53,412.52 548.53,413.02 619.03,413.02 620.03,410.02 621.03,403.02 622.53,395.02 623.53,388.02 624.53,386.52 634.03,386.52 635.03,387.52 640.03,387.52 641.03,385.02 642.03,382.52 643.53,381.02 645.03,380.52 647.03,380.52 648.03,383.02 649.53,385.02 652.03,385.52 655.03,385.52 657.53,383.02 659.53,381.02 662.53,381.02 663.53,374.02 665.03,370.02 667.53,367.52 670.03,364.02 672.53,361.02 675.03,359.52 680.03,358.02 685.03,357.02 690.03,356.52 702.53,355.52 730.03,355.02 732.53,352.52 733.53,355.02 735.03,355.52 735.53,380.02 736.03,400.02 737.03,414.02 740.03,414.52 765.03,414.52 767.53,413.52 772.53,413.52 774.03,414.52 797.53,414.52 800.03,413.52 802.53,412.52 806.03,412.52 807.53,411.02 809.03,408.52 810.03,405.02 811.03,397.52 811.53,393.02 813.53,392.52 815.03,392.02 820.03,391.52 821.53,392.52 845.03,392.52 846.53,391.52 850.03,391.52 851.03,394.02 851.53,396.02 852.53,388.02 853.53,383.02 854.53,380.52 860.03,380.52 861.53,379.52 915.03,379.52 916.53,380.52 920.03,380.52 921.03,379.52 922.53,379.52 924.03,378.52 932.53,378.52 933.53,379.52 940.03,379.52 940.53,385.02 941.53,388.52 943.53,389.02 959.53,389.02 960.03,395.02 961.03,405.02 961.53,413.02 1025.03,413.02 1026.53,414.02 1036.03,414.02 1037.03,410.02 1038.03,406.52 1040.03,402.02 1041.53,397.52 1043.03,391.02 1044.03,389.52 1050.03,389.52 1052.53,390.52 1055.03,389.52 1067.53,389.02 1070.03,387.52 1071.53,383.02 1073.53,376.02 1075.03,371.52 1077.03,369.52 1080.03,368.02 1085.03,365.52 1090.03,364.02 1095.03,363.02 1100.03,362.52 1110.03,361.02 1125.03,360.27 1136.03,360.02 1142.53,360.02 1144.03,361.02 1146.03,363.52 1147.53,367.02 1148.03,385.02 1149.03,400.02 1150.03,409.02 1151.03,414.52 1171.03,414.52" stroke="#00ff00" stroke-width="1" fill="none" shape-rendering="crispEdges" stroke-linejoin="miter"/><polyline points="42.03,534.52 45.03,534.52 47.03,535.52 50.03,531.02 53.53,525.52 54.53,532.02 55.53,535.02 59.03,534.52 60.03,535.52 61.53,534.02 62.53,535.52 68.03,535.52 69.03,534.52 70.03,535.52 76.03,535.52 76.53,534.52 77.53,535.52 95.03,535.52 95.53,527.02 96.53,517.02 97.03,534.02 98.03,530.02 98.53,520.02 99.53,490.02 100.53,463.52 101.53,466.02 102.53,487.02 103.03,510.02 104.53,520.02 106.03,530.02 107.03,535.02 108.53,502.02 109.53,520.02 110.53,535.02 112.03,505.02 112.53,477.02 113.53,500.02 114.53,520.02 115.53,533.02 117.53,513.02 119.03,528.02 120.03,515.02 120.53,492.02 121.53,476.02 122.53,505.02 123.03,533.02 124.03,515.02 125.53,502.02 126.53,498.02 127.53,520.02 128.53,531.02 129.53,520.02 130.53,517.02 131.53,530.02 132.53,540.02 134.03,535.02 135.53,525.02 136.53,535.02 137.53,541.02 139.03,538.02 140.03,537.02 141.53,540.02 144.03,540.52 185.03,540.52 222.53,540.52 223.03,530.02 223.53,521.02 224.53,527.02 225.53,540.02 226.03,535.02 227.03,539.02 230.03,539.52 232.53,541.02 255.03,541.52 316.03,541.52 317.03,541.02 325.03,541.02 326.03,540.02 330.03,540.02 331.03,539.02 333.03,540.02 336.03,539.52 336.53,537.52 337.03,540.02 340.03,539.02 342.53,540.02 345.03,538.52 347.53,539.02 349.03,537.02 350.03,534.52 351.03,541.02 351.53,530.02 352.03,528.02 352.53,512.02 353.53,507.02 355.03,503.02 356.03,492.02 357.03,483.02 357.53,468.52 359.03,469.02 359.53,500.02 360.03,534.02 361.03,536.02 361.53,515.02 362.53,500.02 363.53,482.02 364.53,472.52 365.03,492.02 365.53,510.02 366.53,495.02 367.53,512.02 368.53,502.02 369.03,517.02 370.03,522.02 371.03,527.02 372.53,531.02 373.53,535.02 374.03,537.52 375.03,526.02 375.53,517.02 376.53,522.02 377.53,527.02 378.53,525.02 379.53,529.02 380.53,523.02 381.03,519.02 382.53,524.02 384.03,527.02 385.03,524.02 386.03,529.02 387.53,524.02 389.03,520.02 390.53,517.02 391.53,514.02 392.53,523.02 393.53,527.02 395.03,530.02 396.53,526.02 397.53,522.02 398.53,527.02 400.03,531.02 402.03,533.02 403.03,533.52 403.53,507.02 404.53,470.02 405.53,460.52 412.53,460.52 413.53,459.52 417.53,460.02 418.53,459.02 420.03,460.02 426.03,460.02 427.03,461.02 429.03,460.02 489.03,460.02 490.03,461.02 512.53,461.02 514.53,458.02 515.53,460.52 524.03,460.52 525.53,459.52 527.03,458.02 527.53,463.02 528.03,487.02 528.53,522.02 529.53,530.02 530.53,527.02 531.53,534.02 532.53,531.02 533.53,537.02 534.53,541.02 535.03,520.02 535.53,503.02 536.53,467.02 539.03,467.02 539.53,493.02 540.53,510.02 541.53,527.02 543.03,531.02 544.03,537.02 545.03,541.02 546.53,536.02 547.53,539.02 549.03,529.02 550.53,522.02 552.03,533.02 553.53,531.02 555.03,536.02 556.03,534.02 557.03,537.02 558.03,527.02 558.53,517.02 559.53,530.02 560.53,540.02 561.03,520.02 561.53,500.02 562.53,466.02 564.03,466.02 564.53,492.02 565.53,505.02 566.03,520.02 567.03,505.02 568.03,525.02 569.03,535.02 570.03,539.02 571.03,540.02 572.53,527.02 573.53,520.02 574.53,531.02 575.53,538.02 577.03,530.02 578.53,522.02 579.53,508.02 580.53,524.02 581.53,532.02 583.03,536.02 584.53,533.02 586.03,538.02 587.03,534.02 588.53,540.02 590.03,541.02 591.53,531.02 592.53,540.02 594.03,536.02 595.03,541.02 596.53,527.02 597.53,538.02 598.53,506.02 599.53,522.02 600.53,535.02 602.03,540.02 603.53,525.02 604.53,516.02 605.53,530.02 606.53,538.02 608.03,540.02 608.53,520.02 609.03,490.02 609.53,466.52 610.53,468.02 611.03,490.02 611.53,515.02 612.53,512.02 613.53,520.02 614.53,527.02 615.53,533.02 616.53,523.02 617.53,516.02 618.53,530.02 619.03,538.02 619.53,520.02 620.03,490.02 620.53,468.52 621.53,468.52 622.03,500.02 622.53,524.02 623.53,500.02 624.53,459.52 625.03,490.02 625.53,524.02 640.03,524.02 640.53,495.02 641.53,464.02 643.53,463.02 646.03,461.52 647.53,461.52 648.03,493.02 648.53,524.02 657.03,524.02 658.03,520.02 659.53,516.02 661.03,513.02 662.03,506.02 662.53,490.02 663.53,470.02 664.53,461.52 666.53,462.52 695.03,462.52 697.03,463.52 698.53,462.52 729.53,462.52 730.53,460.02 731.03,470.02 732.03,487.02 732.53,503.02 733.03,520.02 734.03,530.02 735.03,541.02 736.53,535.02 737.53,520.02 738.53,512.02 739.53,510.02 740.53,525.02 741.53,532.02 742.53,538.02 744.03,536.02 745.53,540.02 747.03,538.02 748.03,541.02 749.53,538.02 751.03,535.02 751.53,525.02 752.53,500.02 753.03,480.02 753.53,466.02 754.53,468.02 755.53,483.02 756.03,500.02 757.03,515.02 758.03,534.02 759.53,540.02 761.03,538.02 762.03,530.02 763.03,520.02 764.53,516.02 765.53,525.02 766.53,530.02 767.53,536.02 769.03,538.02 770.03,530.02 771.03,520.02 771.53,516.02 772.53,527.02 773.03,522.02 774.03,530.02 775.53,535.02 777.03,540.02 779.03,538.02 781.03,541.02 784.03,541.02 785.53,535.02 786.53,526.02 787.53,534.02 788.53,541.02 790.03,540.02 791.53,527.02 792.53,512.02 793.53,508.02 794.53,521.02 795.53,535.02 796.03,505.02 796.53,483.02 797.53,471.02 798.53,468.02 800.53,466.02 801.53,470.02 802.03,490.02 802.53,515.02 804.03,517.02 805.53,520.02 806.53,529.02 807.03,500.02 807.53,470.02 809.03,468.02 809.53,462.02 810.53,459.52 811.53,462.52 840.03,462.52 842.53,461.02 844.03,460.02 846.03,461.02 850.03,461.02 851.03,460.02 852.53,459.52 853.53,462.02 854.53,466.02 855.53,461.52 860.03,461.02 862.53,462.02 865.03,461.02 866.03,460.02 867.03,461.52 875.03,461.52 877.53,460.52 880.03,461.52 882.53,460.52 884.03,461.52 895.03,461.52 897.53,460.52 900.03,461.52 905.03,461.52 907.03,462.52 908.53,461.02 910.03,461.52 927.03,461.52 928.03,462.52 931.03,462.52 932.03,461.52 937.53,460.52 939.03,459.52 939.53,470.02 940.03,485.02 940.53,510.02 941.03,485.02 941.53,462.52 955.03,462.52 956.53,460.02 958.53,460.02 959.53,463.02 960.53,483.02 961.53,470.02 962.53,469.02 963.03,495.02 964.03,522.02 965.53,531.02 967.03,536.02 968.53,540.02 970.03,541.02 972.53,540.02 974.53,538.02 975.53,534.02 977.03,540.02 978.03,525.02 978.53,503.02 979.53,470.02 981.53,470.02 982.03,500.02 982.53,503.02 983.03,520.02 984.03,535.02 985.03,541.02 986.53,530.02 987.53,520.02 988.53,514.02 989.53,522.02 990.53,527.02 992.03,533.02 993.53,537.02 995.03,540.02 997.03,541.02 998.53,535.02 999.53,522.02 1000.53,517.02 1001.53,527.02 1002.53,535.02 1003.53,539.02 1005.03,536.02 1006.03,534.02 1007.53,537.02 1010.03,539.02 1012.53,540.02 1015.03,541.02 1017.53,540.02 1020.03,540.02 1021.03,535.02 1022.03,529.02 1023.03,536.02 1024.03,540.02 1025.03,530.02 1026.03,520.02 1026.53,507.02 1027.53,513.02 1028.53,502.02 1029.53,515.02 1030.53,530.02 1031.53,536.02 1033.03,540.02 1034.53,541.02 1035.03,530.02 1035.53,510.02 1036.53,480.02 1037.53,469.52 1038.03,500.02 1039.03,532.02 1039.53,500.02 1040.53,470.02 1041.53,458.52 1042.53,461.02 1072.53,461.02 1073.53,462.02 1082.53,462.02 1083.53,463.02 1084.53,462.02 1086.03,462.52 1087.53,462.02 1095.03,462.52 1097.53,462.52 1100.03,463.02 1101.53,464.02 1102.03,465.02 1133.53,463.02 1136.03,463.52 1140.03,463.02 1142.53,462.52 1144.03,461.02 1145.03,458.52 1145.53,470.02 1146.03,490.02 1146.53,510.02 1147.03,520.02 1148.03,524.02 1148.53,520.02 1149.53,527.02 1150.53,521.02 1151.03,530.02 1152.03,533.02 1153.03,538.02 1154.03,534.02 1155.03,538.02 1156.53,536.02 1158.03,539.02 1159.53,541.02 1161.03,537.02 1162.53,541.02 1164.03,539.02 1166.03,540.02 1167.03,533.02 1167.53,527.02 1168.53,540.02 1169.03,535.02 1169.53,540.02 1171.03,540.02" stroke="#00ff00" stroke-width="1" fill="none" shape-rendering="crispEdges" stroke-linejoin="miter"/><polyline points="42.03,632.52 43.53,632.52 44.03,650.02 44.53,665.02 45.03,670.02 46.53,672.52 98.53,672.52 99.03,625.02 99.53,578.52 101.53,578.52 102.03,605.02 102.53,625.02 103.03,652.02 103.53,668.02 104.53,672.02 119.53,672.52 120.53,670.52 121.53,672.52 122.53,670.52 123.53,672.52 124.53,670.52 125.53,672.52 126.03,670.52 127.03,672.52 352.53,672.52 353.53,670.52 355.53,670.52 356.53,590.52 359.53,590.52 360.53,670.52 362.53,670.52 363.53,590.52 364.53,590.52 365.53,632.52 366.53,670.52 367.53,590.52 368.53,670.52 369.53,671.52 370.53,672.52 403.03,672.52 403.53,632.02 404.53,590.52 527.03,590.52 527.53,612.02 528.53,632.02 530.03,633.02 530.53,652.02 531.53,671.02 532.53,672.52 535.03,672.52 535.53,632.02 536.53,590.52 539.03,590.52 539.53,632.02 540.03,668.02 541.03,671.52 542.53,672.52 560.53,672.52 561.03,632.02 562.53,590.52 564.03,590.52 564.53,632.02 565.03,668.02 566.53,671.02 568.53,672.52 577.53,672.52 579.03,671.52 580.03,670.02 581.03,672.52 597.53,672.52 598.53,670.52 600.03,672.52 607.03,672.52 607.53,632.02 608.53,590.52 610.03,590.52 610.53,632.02 611.03,668.02 612.53,672.52 619.53,672.52 620.53,590.52 621.53,590.52 622.53,590.52 623.53,632.52 624.53,590.52 625.53,590.52 626.53,632.52 627.53,590.52 628.53,632.52 631.53,632.52 632.53,590.52 633.53,632.52 640.53,632.52 641.53,590.52 644.93,590.52 647.03,590.52 647.53,612.02 648.03,612.02 648.53,632.52 656.53,632.52 657.03,612.02 657.53,590.52 733.53,590.52 734.03,612.02 734.53,632.52 736.03,633.02 736.53,652.02 737.53,668.02 738.53,671.02 740.03,672.52 752.03,672.52 752.53,632.02 753.53,590.52 755.03,590.52 755.53,632.02 756.03,668.02 757.03,671.02 758.53,672.52 792.53,672.52 793.53,670.52 794.53,672.52 795.53,672.52 796.03,632.02 796.53,590.52 801.03,590.52 801.53,612.02 802.53,612.02 803.03,652.02 803.53,668.02 805.03,672.02 805.53,632.02 806.53,590.52 938.53,590.52 939.03,612.02 940.03,632.52 940.53,612.02 941.53,590.52 962.03,590.52 962.53,612.02 963.53,632.52 964.53,633.02 965.03,652.02 965.53,668.02 967.03,672.02 978.03,672.52 978.53,632.02 979.53,590.52 981.03,590.52 981.53,612.02 982.53,612.02 983.03,652.02 983.53,670.02 984.53,672.52 1025.03,672.52 1026.03,671.02 1027.03,672.02 1028.03,670.52 1029.03,672.02 1030.03,672.52 1035.03,672.52 1035.53,632.02 1036.53,590.52 1037.53,590.52 1038.03,612.02 1038.53,655.02 1039.53,670.02 1040.03,612.02 1040.53,590.52 1099.03,590.52 1136.53,590.52 1144.53,590.52 1145.03,612.02 1146.03,612.02 1146.53,632.52 1150.03,632.52 1150.53,652.02 1151.53,672.52 1171.03,672.52" stroke="#00ff00" stroke-width="1" fill="none" shape-rendering="crispEdges" stroke-linejoin="miter"/><polyline points="42.03,795.52 43.03,797.02 45.03,797.52 49.03,797.52 50.53,795.52 52.03,797.02 53.53,796.52 55.03,797.52 66.03,797.52 67.53,798.02 94.53,798.02 95.53,796.52 96.53,795.02 97.53,797.52 98.53,798.02 99.53,794.02 100.53,789.52 101.53,793.02 102.53,792.02 103.53,795.02 104.53,796.02 106.03,797.52 107.53,796.02 109.03,798.52 110.53,798.02 112.03,794.52 113.03,797.02 114.03,796.02 115.53,797.52 116.53,795.02 117.53,796.52 118.53,795.02 120.03,793.52 121.03,797.02 122.53,798.52 124.03,796.02 125.53,795.52 126.53,797.52 128.03,796.52 129.53,795.52 131.03,796.52 132.03,798.02 134.03,798.02 135.03,797.02 136.53,798.02 167.53,798.02 168.53,799.02 170.03,798.52 171.03,799.02 172.53,798.52 174.03,799.02 176.03,799.02 177.53,798.52 179.03,799.02 182.03,799.02 183.53,798.52 185.03,799.02 187.03,798.52 189.03,799.02 190.53,798.52 192.03,799.02 193.03,799.52 221.03,799.52 222.53,797.52 223.53,796.52 224.53,798.02 225.53,798.52 268.03,798.52 269.53,799.02 271.03,798.52 272.53,799.02 274.03,798.52 275.53,799.02 277.03,798.52 285.03,798.52 286.53,799.02 288.03,798.52 293.53,798.52 294.53,799.02 296.03,798.52 336.03,798.52 337.03,797.52 338.03,798.52 342.03,798.52 343.03,799.02 344.03,798.52 350.03,798.02 351.53,796.02 352.53,793.02 354.03,792.52 356.03,790.52 357.53,791.52 359.03,793.52 360.53,796.02 362.03,794.02 364.03,791.52 365.53,793.02 367.03,792.52 369.03,794.52 372.53,795.52 374.53,796.52 376.03,795.52 400.03,795.52 402.03,796.52 403.03,795.02 403.53,775.02 404.53,750.02 405.53,745.02 407.03,740.02 408.03,735.02 408.53,729.52 409.53,738.02 410.53,735.02 411.53,745.02 412.53,750.02 413.53,738.02 416.03,738.02 417.03,740.02 418.03,755.02 418.53,762.02 419.53,750.02 421.03,744.02 422.03,748.02 423.03,744.02 424.03,748.02 425.53,745.02 427.53,743.52 430.03,744.52 432.53,742.02 435.03,743.52 437.53,742.02 440.03,741.52 442.53,742.52 445.03,741.02 447.53,742.02 450.03,740.02 452.53,742.52 455.03,744.52 457.53,743.52 460.03,742.52 462.53,740.52 465.03,739.52 467.53,741.52 470.03,742.52 472.53,740.52 475.03,739.52 477.53,741.52 480.03,740.52 483.03,741.02 484.03,742.52 485.53,745.52 487.03,742.02 490.03,740.52 492.53,738.52 495.03,741.02 497.53,739.52 500.03,740.52 502.53,740.02 505.03,739.52 507.53,738.52 510.03,739.02 512.03,738.52 513.03,739.02 513.53,736.02 514.03,760.02 514.53,784.02 515.03,760.02 515.53,738.02 517.53,737.02 519.53,736.52 520.03,742.02 521.03,748.02 523.03,748.02 524.03,742.02 525.03,733.02 525.53,740.02 526.03,760.02 526.53,775.02 527.03,787.02 528.03,790.02 529.03,793.02 530.53,795.02 532.03,794.02 533.53,796.52 535.03,795.02 536.03,791.02 537.03,789.52 538.03,793.02 539.03,790.02 540.53,792.02 542.03,795.02 543.53,797.02 547.53,797.02 549.03,796.02 550.53,797.02 552.03,796.02 553.53,795.02 555.03,796.52 557.03,794.52 558.53,796.02 560.03,793.52 561.53,795.52 563.03,791.02 564.03,790.52 565.53,793.02 567.03,795.02 568.53,797.52 570.03,798.02 577.53,798.02 579.53,794.52 580.53,798.02 582.53,798.02 585.03,796.52 587.53,798.02 590.03,797.02 592.53,798.52 597.03,797.52 598.53,794.52 599.53,797.02 601.03,798.52 602.53,796.02 604.03,794.52 605.53,797.52 607.03,798.52 608.03,795.02 609.53,790.02 610.53,793.52 612.03,793.02 613.03,795.02 614.03,794.02 615.53,795.52 617.03,794.02 618.03,796.52 619.53,795.02 620.53,791.52 622.03,789.52 623.03,789.02 623.53,765.02 624.53,737.02 625.03,765.02 625.53,790.02 627.53,789.52 630.03,790.02 632.53,789.02 635.03,790.02 640.03,790.02 640.53,750.02 641.53,707.02 643.53,706.52 645.53,708.02 646.53,720.02 647.03,740.02 648.03,775.02 648.53,790.02 652.53,789.52 655.03,791.02 656.53,793.02 657.53,787.02 658.53,783.02 660.03,785.02 662.03,783.52 662.53,765.02 663.03,745.02 663.53,725.02 665.03,718.02 666.03,712.02 667.03,707.52 669.03,709.02 670.53,708.02 672.03,713.02 673.53,709.02 675.03,707.52 677.53,708.02 680.03,707.52 682.53,706.52 685.03,707.52 687.03,706.52 688.53,708.52 690.03,709.02 691.53,713.02 692.53,708.02 694.03,714.02 695.53,707.52 697.03,710.02 700.03,709.02 702.53,710.02 705.03,710.52 707.53,711.02 710.03,710.02 712.53,711.02 715.03,709.02 717.53,710.52 720.03,709.52 722.03,712.02 723.03,709.02 724.03,713.02 725.03,708.52 726.03,712.02 727.03,709.52 728.03,715.02 729.53,720.02 730.53,735.02 731.03,755.02 731.53,775.02 732.53,790.02 733.53,793.02 735.03,795.02 737.03,794.52 738.53,793.02 740.03,795.52 742.53,797.02 747.53,797.52 750.03,796.02 752.53,795.02 753.53,790.52 755.03,792.52 756.53,794.02 758.53,796.52 760.03,797.52 762.53,795.52 764.03,794.52 765.53,797.02 767.53,798.02 770.03,797.52 772.03,795.52 773.03,794.02 774.53,797.02 776.03,798.02 784.03,798.02 785.53,797.02 786.53,795.02 788.03,797.52 790.03,798.02 792.03,796.52 793.53,795.02 795.03,793.02 797.53,791.52 800.03,790.52 801.03,789.52 802.53,792.02 804.03,794.02 805.53,793.52 807.03,791.52 808.53,790.02 809.53,787.02 810.53,780.02 811.03,765.02 811.53,745.02 812.03,725.02 813.03,719.52 815.03,719.02 820.03,718.52 825.03,718.02 830.03,717.52 832.53,718.02 835.03,717.02 840.03,717.02 841.03,714.52 841.53,718.02 842.03,745.02 842.53,772.02 844.03,773.02 846.03,772.02 847.03,775.02 848.53,777.02 849.53,773.02 851.03,770.02 852.03,768.02 852.53,773.02 853.03,770.02 853.53,745.02 854.53,717.52 857.53,717.02 860.03,716.52 861.03,720.02 861.53,722.02 862.53,716.52 865.03,717.02 867.53,715.52 870.03,713.52 872.53,714.52 875.03,712.52 877.53,714.02 880.03,713.02 882.53,716.02 885.03,714.02 887.53,713.52 890.03,712.52 892.53,713.52 895.03,715.02 897.53,713.52 900.03,711.52 902.53,713.52 905.03,716.52 907.53,712.02 910.03,715.52 912.53,716.02 915.03,715.02 917.53,713.52 920.03,716.02 922.53,714.02 925.03,712.52 927.53,713.52 930.03,711.52 932.53,712.52 935.03,711.52 936.53,712.02 937.03,725.02 937.53,755.02 938.53,775.02 939.53,785.02 940.53,794.02 941.03,775.02 941.53,745.02 942.53,716.02 945.03,715.52 950.03,715.02 952.53,714.02 955.03,714.52 955.53,740.02 956.53,772.02 958.53,774.02 960.03,780.02 961.53,789.02 963.53,791.02 965.03,794.02 967.53,797.02 975.03,797.02 977.53,794.02 980.03,791.02 982.53,793.02 984.53,797.02 987.03,795.02 988.53,794.02 990.53,797.52 997.53,797.52 998.53,795.02 1000.03,792.52 1001.53,797.02 1005.03,797.52 1012.53,797.52 1015.03,798.52 1020.03,798.02 1022.53,796.52 1024.03,797.52 1025.53,795.02 1027.03,796.52 1028.53,793.52 1030.03,796.02 1032.53,797.52 1035.03,797.02 1037.03,791.02 1038.03,795.02 1039.03,797.02 1040.03,785.02 1041.03,765.02 1041.53,745.02 1042.53,728.02 1045.03,727.52 1046.53,731.02 1048.53,733.52 1050.03,731.02 1052.53,733.02 1055.03,731.02 1057.53,732.02 1060.03,731.02 1062.53,733.02 1065.03,729.02 1066.53,727.02 1068.03,724.02 1069.03,729.02 1070.53,721.02 1072.03,717.52 1075.03,715.52 1077.53,713.52 1080.03,711.52 1082.53,712.52 1085.03,711.02 1087.53,712.02 1090.03,711.52 1092.53,710.52 1095.03,711.52 1096.53,713.52 1098.03,710.52 1100.03,711.02 1101.03,712.02 1135.03,714.02 1136.53,716.52 1138.03,713.02 1140.03,711.52 1142.53,710.02 1143.03,712.02 1143.53,745.02 1144.53,770.02 1145.03,785.02 1146.03,790.02 1147.53,793.02 1150.03,794.52 1152.53,796.02 1155.03,797.02 1160.03,797.52 1165.03,797.52 1167.03,796.02 1168.03,797.52 1171.03,797.52" stroke="#00ff00" stroke-width="1" fill="none" shape-rendering="crispEdges" stroke-linejoin="miter"/><polyline points="42.43,873.22 45.13,878.62 47.63,883.72 51.03,888.82 55.23,893.42 58.63,896.92 61.23,898.52 198.33,898.52 198.63,913.52 199.53,914.52 199.63,928.52 412.53,928.52 413.03,912.52 413.53,898.52 436.28,898.52 440.03,895.52 445.03,891.52 450.03,888.52 455.03,886.52 462.53,885.52 467.53,884.52 482.53,883.52 503.78,882.52 505.03,882.52 531.28,882.52 535.03,884.02 540.03,886.52 543.78,889.52 547.53,893.52 551.28,897.02 553.03,898.52 640.03,898.52 667.03,898.52 668.03,895.02 669.53,891.27 672.53,886.27 675.03,883.02 680.03,878.77 685.03,874.52 690.03,872.52 697.53,870.77 700.03,870.52 708.78,870.52 710.03,869.52 721.28,869.52 722.53,868.52 733.78,868.52 736.28,873.77 738.78,880.02 742.53,887.52 747.53,893.77 751.28,897.52 753.03,898.52 819.53,898.52 822.53,893.77 826.28,888.77 830.03,885.02 833.78,882.52 837.53,880.52 840.03,877.52 842.53,875.52 845.03,875.52 846.28,876.52 852.53,876.52 854.53,877.52 872.53,877.52 875.03,876.52 878.78,876.52 880.03,875.52 884.53,875.52 887.53,873.02 890.03,871.52 893.78,870.52 900.03,870.52 901.53,869.52 922.03,869.52 923.78,868.52 941.28,868.52 942.53,869.52 960.03,869.52 962.03,873.77 964.53,882.52 967.53,888.77 971.28,893.77 973.78,897.02 975.53,898.52 1057.33,898.52 1079.83,872.82 1084.23,871.62 1090.03,870.52 1093.63,869.52 1101.63,869.22 1103.83,868.52 1109.63,868.52 1127.03,867.52 1146.63,867.52 1148.03,869.42 1150.23,876.02 1152.43,881.82 1155.33,886.92 1158.23,890.82 1161.93,894.82 1165.53,898.52 1171.33,898.52" stroke="#00ff00" stroke-width="1" fill="none" shape-rendering="crispEdges" stroke-linejoin="miter"/><polyline points="42.03,1039.02 45.03,1040.02 47.53,1042.02 50.03,1044.02 52.53,1046.02 55.03,1047.52 57.53,1049.02 61.03,1050.52 198.53,1050.52 199.03,1053.02 199.53,1055.52 407.53,1055.52 408.53,1052.52 410.03,1051.52 415.03,1050.52 442.03,1050.52 445.03,1049.02 450.03,1047.52 455.03,1046.52 460.03,1045.52 474.03,1045.52 475.53,1044.52 537.03,1044.52 540.03,1045.52 545.03,1047.02 550.03,1049.02 553.03,1050.52 640.03,1050.52 670.03,1050.52 675.03,1045.52 680.03,1043.52 687.53,1041.52 697.53,1040.02 698.78,1039.52 721.28,1039.52 722.53,1038.52 735.03,1038.52 740.03,1042.02 746.28,1046.52 751.28,1049.52 753.03,1050.52 823.78,1050.52 828.78,1047.02 833.78,1044.52 840.03,1043.02 845.03,1041.52 853.78,1041.52 855.03,1042.52 879.53,1042.52 881.28,1041.52 888.78,1041.02 893.78,1039.52 913.78,1039.52 915.03,1038.52 961.03,1038.52 963.03,1040.02 971.53,1047.32 974.63,1049.82 976.73,1050.52 1061.63,1050.52 1082.63,1040.52 1088.93,1039.72 1091.03,1039.52 1102.53,1039.52 1133.03,1038.52 1149.73,1038.52 1151.83,1040.02 1160.23,1046.82 1163.33,1049.42 1166.53,1050.52 1171.03,1050.52" stroke="#00ff00" stroke-width="1" fill="none" shape-rendering="crispEdges" stroke-linejoin="miter"/></svg>
<div class="hd" style="top:45.5px"><span class="mn">Мін : 38</span><span class="mx">Макс : 65</span></div><div class="tt" style="top:45px">Температура ГП, °C</div><div class="ax" style="top:57.5px">100</div><div class="ax" style="top:158.5px">0</div><div class="tm" style="top:158px"><span>16:37:23</span></div><div class="vl" style="top:93px"><span>63</span></div><div class="cu" style="top:112px">45</div><div class="hd" style="top:172.5px"><span class="mn">Мін : 0</span><span class="mx">Макс : 100</span></div><div class="tt" style="top:172px">Завантаження ГП, %</div><div class="ax" style="top:184.5px">100</div><div class="ax" style="top:285.5px">0</div><div class="tm" style="top:285px"><span>16:37:23</span></div><div class="vl v2" style="top:184px"><span>99</span></div><div class="cu" style="top:284px">0</div><div class="hd" style="top:299.5px"><span class="mn">Мін : 1082</span><span class="mx">Макс : 15286</span></div><div class="tt" style="top:299px">Завантаження пам'яті, МБ</div><div class="ax" style="top:311.5px">20480</div><div class="ax" style="top:412.5px">0</div><div class="tm" style="top:412px"><span>16:37:23</span></div><div class="vl" style="top:351px"><span>12125</span></div><div class="cu" style="top:405px">1367</div><div class="hd" style="top:426.5px"><span class="mn">Мін : 187</span><span class="mx">Макс : 3105</span></div><div class="tt" style="top:426px">Частота ядра, МГц</div><div class="ax" style="top:438.5px">3300</div><div class="ax" style="top:539.5px">0</div><div class="tm" style="top:539px"><span>16:37:23</span></div><div class="vl" style="top:453px"><span>2775</span></div><div class="cu" style="top:531px">232</div><div class="hd" style="top:553.5px"><span class="mn">Мін : 405</span><span class="mx">Макс : 16001</span></div><div class="tt" style="top:553px">Частота пам'яті, МГц</div><div class="ax" style="top:565.5px">17000</div><div class="ax" style="top:666.5px">0</div><div class="tm" style="top:666px"><span>16:37:23</span></div><div class="vl" style="top:581px"><span>14001</span></div><div class="cu" style="top:663px">405</div><div class="hd" style="top:680.5px"><span class="mn">Мін : 16.6</span><span class="mx">Макс : 610.0</span></div><div class="tt" style="top:680px">Енергоспоживання, Вт</div><div class="ax" style="top:692.5px">650</div><div class="ax" style="top:793.5px">0</div><div class="tm" style="top:793px"><span>16:37:23</span></div><div class="vl" style="top:704px"><span>565.9</span></div><div class="cu" style="top:788px">30.3</div><div class="hd" style="top:807.5px"><span class="mn">Мін : 0</span><span class="mx">Макс : 61</span></div><div class="tt" style="top:807px">Швидкість вентилятора, %</div><div class="ax" style="top:819.5px">100</div><div class="ax" style="top:920.5px">0</div><div class="tm" style="top:920px"><span>16:37:23</span></div><div class="vl" style="top:858px"><span>60</span></div><div class="cu" style="top:889px">30</div><div class="hd" style="top:934.5px"><span class="mn">Мін : 0</span><span class="mx">Макс : 1789</span></div><div class="tt" style="top:934px">Тахометр вентилятора, об/хв</div><div class="ax" style="top:946.5px">10000</div><div class="ax" style="top:1047.5px">0</div><div class="tm" style="top:1047px"><span>16:37:23</span></div><div class="vl" style="top:1029px"><span>1720</span></div><div class="cu" style="top:1041px">493</div>
</body></html>
